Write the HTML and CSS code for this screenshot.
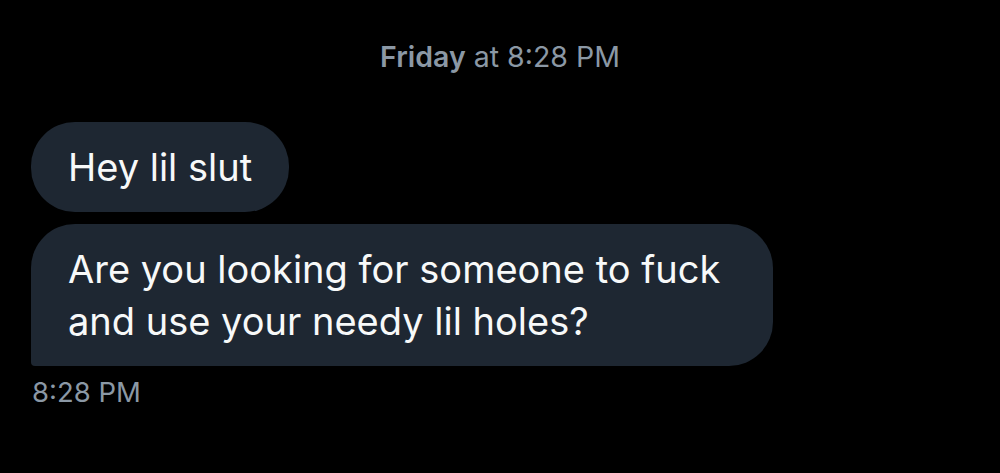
FILE: index.html
```html
<!DOCTYPE html>
<html>
<head>
<meta charset="utf-8">
<link rel="stylesheet" href="styles.css">
</head>
<body>
<div class="chat">
  <div class="day"><span class="day-name">Friday</span> at 8:28 PM</div>
  <div class="group">
    <div class="bubble first">Hey lil slut</div>
    <div class="bubble last">Are you looking for someone to fuck and use your needy lil holes?</div>
  </div>
  <div class="time">8:28 PM</div>
</div>
</body>
</html>
```

FILE: styles.css
```css
html, body {
  margin: 0;
  padding: 0;
  background: #000;
  height: 100%;
}
body {
  font-family: Inter, "Noto Sans", sans-serif;
  color: #f7f9f9;
}
.chat {
  padding: 40px 31px 0 31px;
  display: flex;
  flex-direction: column;
}
.day {
  text-align: center;
  color: #8b98a5;
  font-size: 28.5px;
  line-height: 34px;
}
.day-name {
  font-weight: 600;
}
.group {
  margin-top: 48px;
  display: flex;
  flex-direction: column;
  align-items: flex-start;
  gap: 12px;
}
.bubble {
  background: #1e2732;
  font-size: 38px;
  line-height: 52px;
  padding: 19px 37px;
  max-width: 742px;
  box-sizing: border-box;
  border-radius: 44px;
}
.bubble.last {
  border-bottom-left-radius: 4px;
}
.time {
  margin-top: 9px;
  color: #8b98a5;
  font-size: 27.5px;
  line-height: 34px;
  padding-left: 1px;
}
```
